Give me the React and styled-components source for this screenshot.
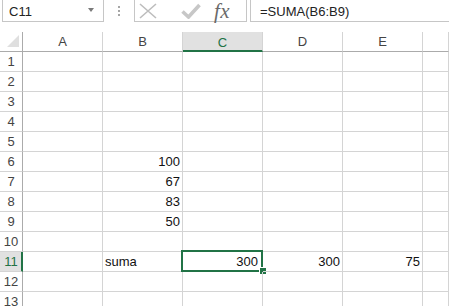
import styled, { createGlobalStyle } from 'styled-components';

const GlobalStyle = createGlobalStyle`
  html, body {
    margin: 0;
    padding: 0;
    background: #fff;
    overflow: hidden;
  }
  body {
    font-family: "Liberation Sans", Arial, sans-serif;
    width: 449px;
    height: 306px;
  }
`;

const GREEN = '#217346';
const GRID = '#d4d4d4';
const HEAD_LINE = '#ababab';

const columns = ['A', 'B', 'C', 'D', 'E', ''];

// cell values keyed by row, then column
const values = {
  6: { B: '100' },
  7: { B: '67' },
  8: { B: '83' },
  9: { B: '50' },
  11: { B: 'suma', C: '300', D: '300', E: '75' },
};

const isText = v => isNaN(Number(v));

const Page = styled.div`
  width: 449px;
  height: 306px;
  overflow: hidden;
`;

const Toolbar = styled.div`
  display: flex;
  height: 23px;
  margin-top: -1px;
`;

const NameBox = styled.div`
  box-sizing: border-box;
  width: 102px;
  margin-left: 2px;
  border: 1px solid #c6c6c6;
  display: flex;
  align-items: center;
  justify-content: space-between;
  padding: 1px 6px 0 6px;
  font-size: 13px;
  color: #222;
`;

const DropArrow = styled.span`
  width: 0;
  height: 0;
  border-left: 3.5px solid transparent;
  border-right: 3.5px solid transparent;
  border-top: 4px solid #7a7a7a;
  margin-right: 3px;
  margin-top: -3px;
`;

const Grip = styled.div`
  width: 30px;
  display: flex;
  flex-direction: column;
  align-items: center;
  justify-content: center;
  gap: 2px;
  padding-top: 1px;

  span {
    width: 2px;
    height: 2px;
    background: #a6a6a6;
  }
`;

const FuncBox = styled.div`
  box-sizing: border-box;
  width: 113px;
  border: 1px solid #c6c6c6;
  display: flex;
  align-items: center;
  padding-left: 4px;
`;

const IconSlot = styled.div`
  width: ${props => props.w}px;
  display: flex;
  align-items: center;
`;

const Fx = styled.span`
  font-family: "Liberation Serif", "Times New Roman", serif;
  font-style: italic;
  font-size: 21px;
  line-height: 18px;
  color: #6a6a6a;
  letter-spacing: 0.5px;
`;

const FormulaBar = styled.div`
  flex: 1;
  margin-left: 3px;
  margin-right: -10px;
  border: 1px solid #c6c6c6;
  display: flex;
  align-items: center;
  padding: 1px 0 0 9px;
  font-size: 13px;
  color: #222;
`;

const Sheet = styled.div`
  margin-top: 10px;
  display: grid;
  grid-template-columns: 23px repeat(5, 80px) 1fr;
  grid-auto-rows: 20px;
  font-size: 13px;
`;

const Corner = styled.div`
  box-sizing: border-box;
  border-right: 1px solid ${HEAD_LINE};
  border-bottom: 1px solid ${HEAD_LINE};
  display: flex;
  align-items: flex-end;
  justify-content: flex-end;
  padding: 0 3px 4px 0;
`;

const ColHead = styled.div`
  box-sizing: border-box;
  border-right: 1px solid ${GRID};
  border-bottom: ${props => (props.active ? `2px solid ${GREEN}` : `1px solid ${HEAD_LINE}`)};
  background: ${props => (props.active ? '#e1e1e1' : '#fff')};
  color: ${props => (props.active ? GREEN : '#444')};
  text-align: center;
  line-height: 19px;
  padding-top: ${props => (props.active ? 1 : 0)}px;
`;

const RowHead = styled.div`
  box-sizing: border-box;
  border-right: ${props => (props.active ? `2px solid ${GREEN}` : `1px solid ${HEAD_LINE}`)};
  border-bottom: 1px solid ${GRID};
  background: ${props => (props.active ? '#e1e1e1' : '#fff')};
  color: ${props => (props.active ? GREEN : '#444')};
  text-align: center;
  line-height: 18px;
  padding-top: 1px;
  padding-left: ${props => (props.active ? 1 : 0)}px;
`;

const Cell = styled.div`
  position: relative;
  box-sizing: border-box;
  border-right: 1px solid ${GRID};
  border-bottom: 1px solid ${GRID};
  line-height: 18px;
  padding: 1px ${props => (props.selected ? 4 : 2)}px 0 2px;
  text-align: ${props => (props.text ? 'left' : 'right')};
  color: #111;
  white-space: nowrap;
`;

const Selection = styled.div`
  position: absolute;
  left: -2px;
  top: -2px;
  width: 82px;
  height: 22px;
  box-sizing: border-box;
  border: 2px solid ${GREEN};
  pointer-events: none;
`;

const FillHandle = styled.div`
  position: absolute;
  right: -6px;
  bottom: -5px;
  width: 6px;
  height: 6px;
  background: ${GREEN};
  border: 1px solid #fff;
`;

const App = () => {
  const rows = Array.from({ length: 13 }, (_, i) => i + 1);

  return (
    <Page>
      <GlobalStyle />
      <Toolbar>
        <NameBox>
          C11
          <DropArrow />
        </NameBox>
        <Grip>
          <span />
          <span />
          <span />
        </Grip>
        <FuncBox>
          <IconSlot w={42}>
            <svg width="18" height="16" viewBox="0 0 18 16">
              <path d="M1 1 L17 15 M17 1 L1 15" stroke="#bdbdbd" strokeWidth="1.6" fill="none" />
            </svg>
          </IconSlot>
          <IconSlot w={33}>
            <svg width="20" height="16" viewBox="0 0 20 16">
              <path d="M1.5 8.5 L7.5 14 L18.5 2" stroke="#c7c7c7" strokeWidth="3.6" fill="none" />
            </svg>
          </IconSlot>
          <Fx>fx</Fx>
        </FuncBox>
        <FormulaBar>=SUMA(B6:B9)</FormulaBar>
      </Toolbar>

      <Sheet>
        <Corner>
          <svg width="12" height="12" viewBox="0 0 12 12">
            <polygon points="12,0 12,12 0,12" fill="#dfdfdf" />
          </svg>
        </Corner>
        {columns.map((col, i) => (
          <ColHead key={i} active={col === 'C'}>
            {col}
          </ColHead>
        ))}

        {rows.map(row => (
          <RowFragment key={row} row={row} />
        ))}
      </Sheet>
    </Page>
  );
};

const RowFragment = ({ row }) => {
  const rowValues = values[row] || {};
  return (
    <>
      <RowHead active={row === 11}>{row}</RowHead>
      {columns.map((col, i) => {
        const value = rowValues[col] || '';
        const selected = row === 11 && col === 'C';
        return (
          <Cell key={i} text={value && isText(value)} selected={selected}>
            {value}
            {selected && (
              <Selection>
                <FillHandle />
              </Selection>
            )}
          </Cell>
        );
      })}
    </>
  );
};

export default App;
